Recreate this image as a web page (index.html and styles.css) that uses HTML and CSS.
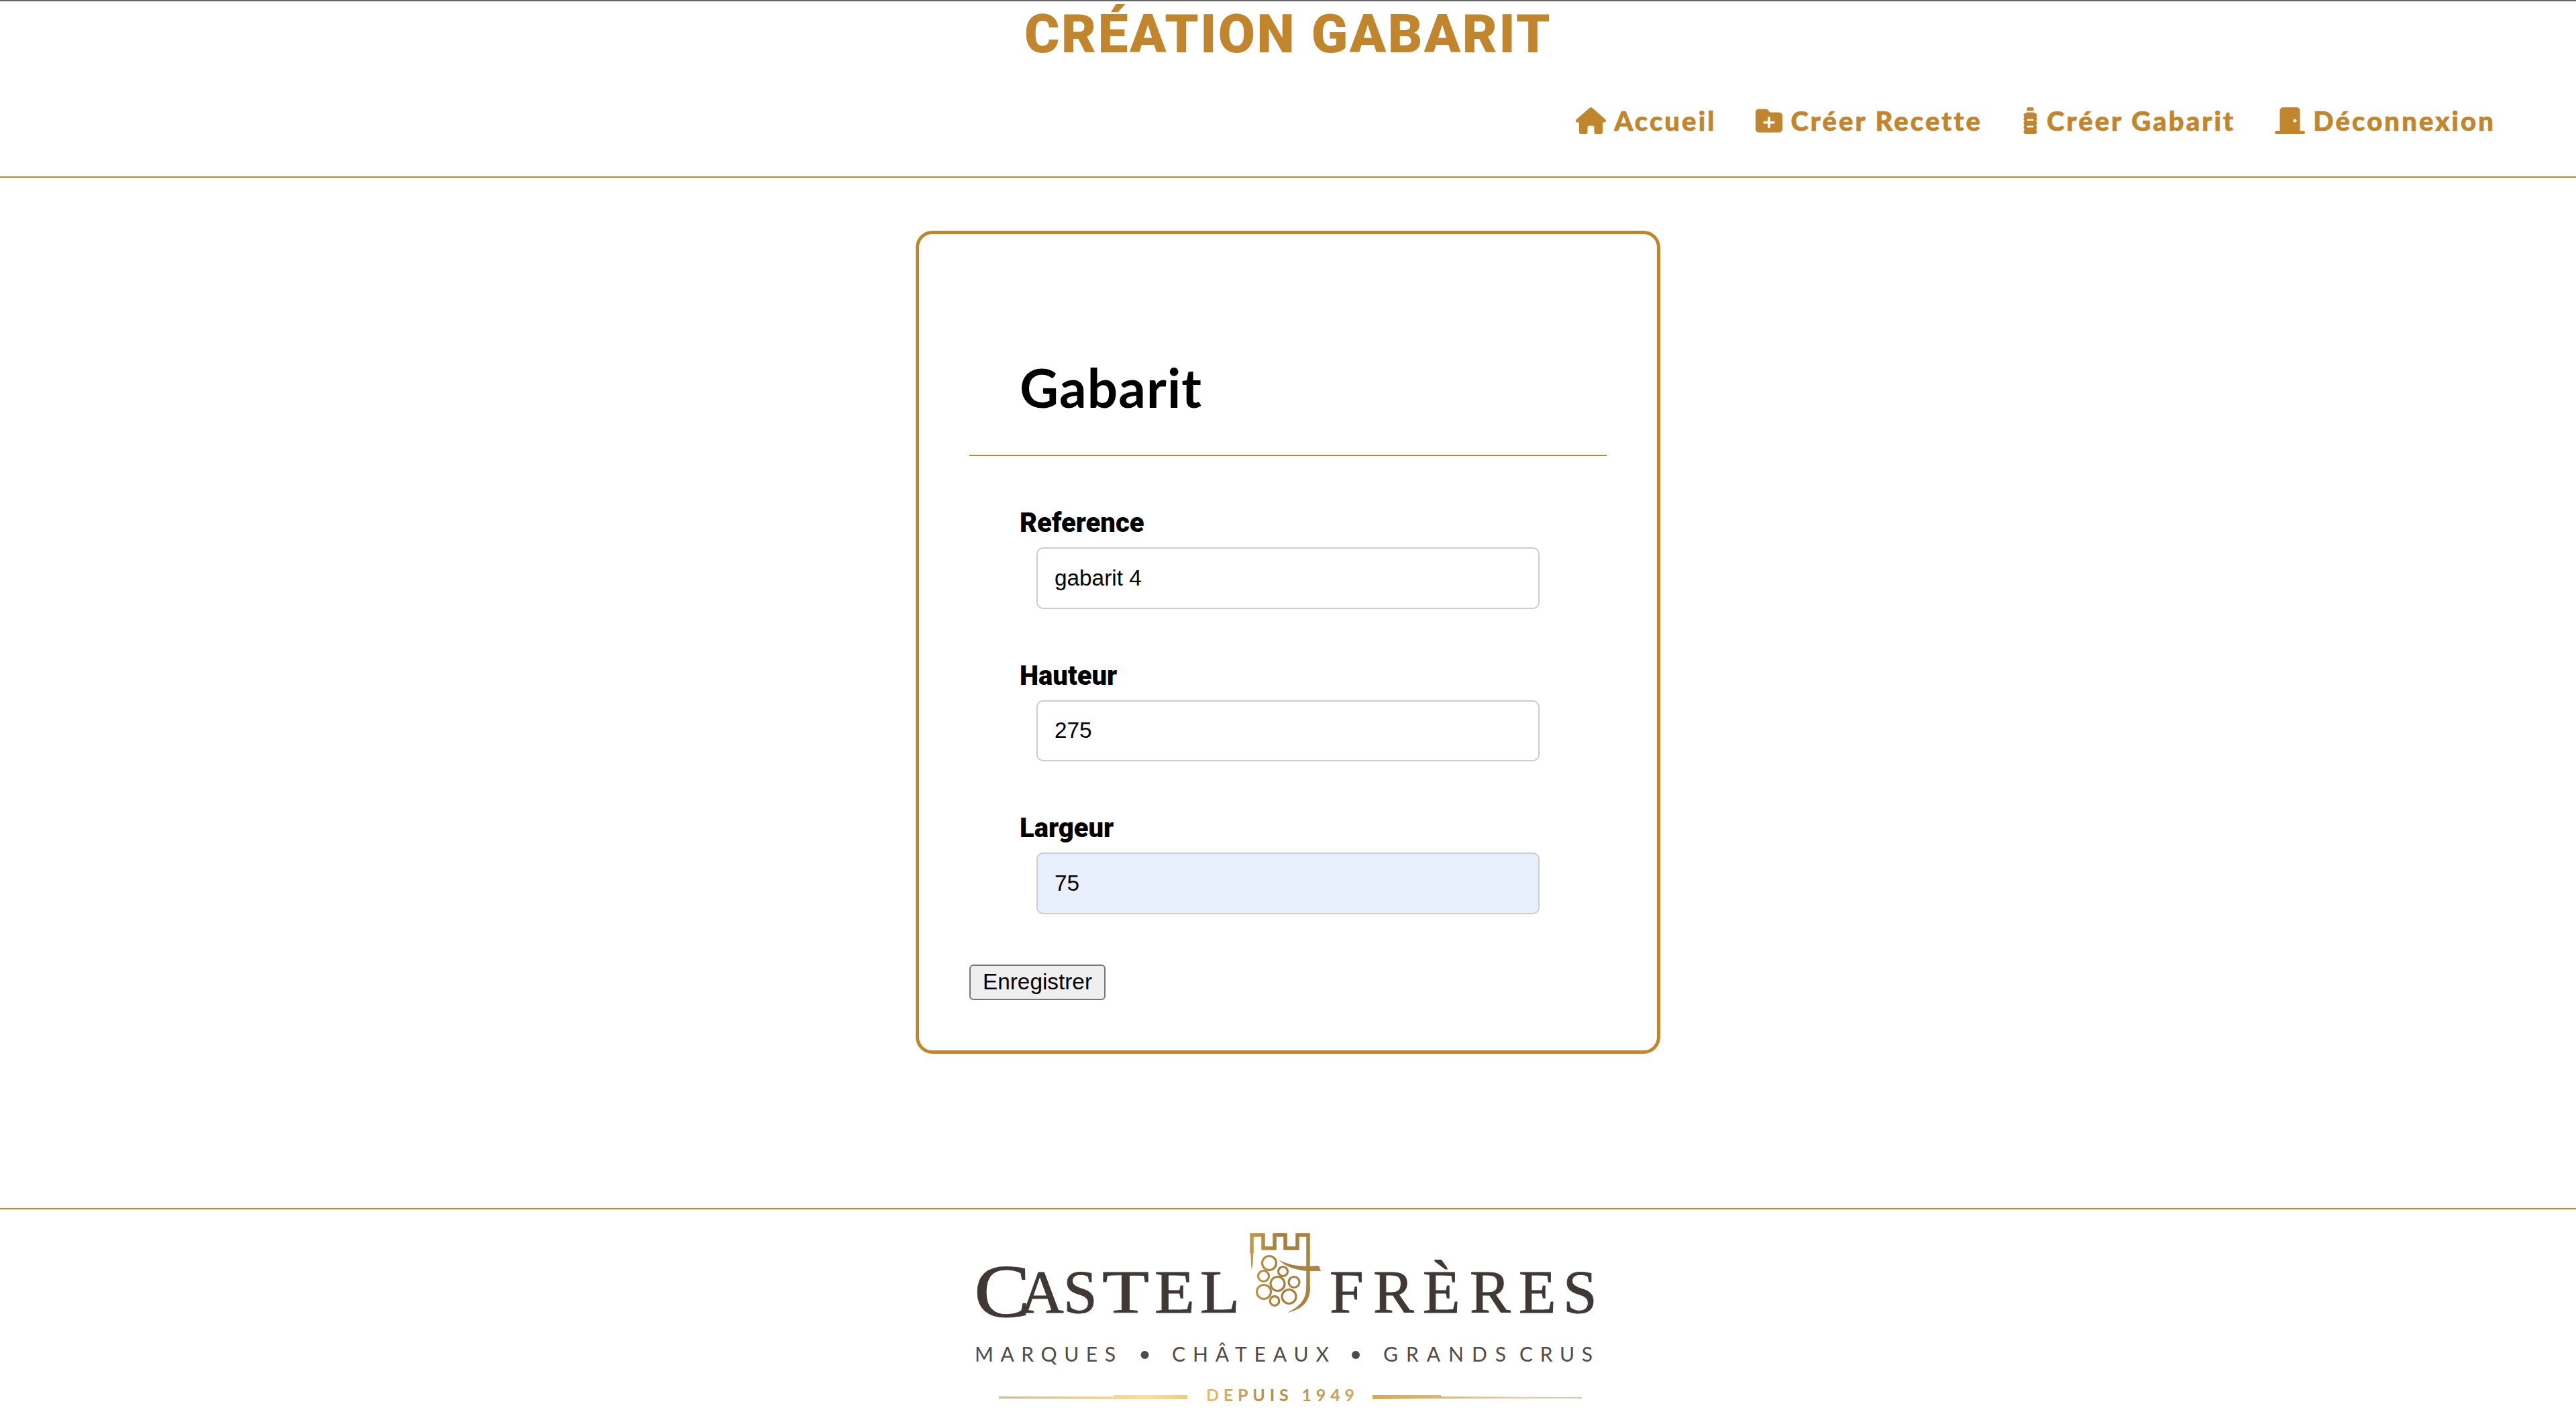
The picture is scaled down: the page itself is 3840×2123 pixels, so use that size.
FILE: index.html
```html
<!DOCTYPE html>
<html lang="fr">
<head>
<meta charset="utf-8">
<title>Création Gabarit</title>
<link rel="stylesheet" href="styles.css">
</head>
<body>
<header class="header">
  <h1 class="page-title">CRÉATION GABARIT</h1>
  <nav class="nav">
    <a class="nav-link"><svg class="icon icon-wide" viewBox="0 0 576 512"><path d="M575.8 255.5c0 18-15 32.1-32 32.1h-32l.7 160.2c0 2.7-.2 5.4-.5 8.1V472c0 22.1-17.9 40-40 40H456c-1.1 0-2.2 0-3.3-.1c-1.4 .1-2.8 .1-4.2 .1H416 392c-22.1 0-40-17.9-40-40V448 384c0-17.7-14.3-32-32-32H256c-17.7 0-32 14.3-32 32v64 24c0 22.1-17.9 40-40 40H160 128.1c-1.5 0-3-.1-4.5-.2c-1.2 .1-2.4 .2-3.6 .2H104c-22.1 0-40-17.9-40-40V360c0-.9 0-1.9 .1-2.8V287.6H32c-18 0-32-14-32-32.1c0-9 3-17 10-24L266.4 8c7-7 15-8 22-8s15 2 21 7L564.8 231.5c8 7 12 15 11 24z"/></svg><span>Accueil</span></a>
    <a class="nav-link"><svg class="icon" viewBox="0 0 512 512"><path d="M512 416c0 35.3-28.7 64-64 64H64c-35.3 0-64-28.7-64-64V96C0 60.7 28.7 32 64 32H192c20.1 0 39.1 9.5 51.2 25.6l19.2 25.6c6 8.1 15.5 12.8 25.6 12.8H448c35.3 0 64 28.7 64 64V416zM232 376c0 13.3 10.7 24 24 24s24-10.7 24-24V312h64c13.3 0 24-10.7 24-24s-10.7-24-24-24H280V200c0-13.3-10.7-24-24-24s-24 10.7-24 24v64H168c-13.3 0-24 10.7-24 24s10.7 24 24 24h64v64z"/></svg><span>Créer Recette</span></a>
    <a class="nav-link"><svg class="icon icon-narrow" viewBox="0 0 320 512"><path d="M120 0h80c13.3 0 24 10.7 24 24V64H96V24c0-13.3 10.7-24 24-24zM32 151.7c0-15.6 9-29.8 23.2-36.5l24.4-11.4c11-5.1 23-7.8 35.1-7.8h90.6c12.1 0 24.1 2.7 35.1 7.8l24.4 11.4c14.1 6.6 23.2 20.8 23.2 36.5c0 14.4-7.5 27-18.9 34.1c11.5 8.8 18.9 22.6 18.9 38.2c0 16.7-8.5 31.4-21.5 40c12.9 8.6 21.5 23.3 21.5 40s-8.5 31.4-21.5 40c12.9 8.6 21.5 23.3 21.5 40s-8.5 31.4-21.5 40c12.9 8.6 21.5 23.3 21.5 40c0 26.5-21.5 48-48 48H80c-26.5 0-48-21.5-48-48c0-16.7 8.5-31.4 21.5-40C40.5 415.4 32 400.7 32 384s8.5-31.4 21.5-40C40.5 335.4 32 320.7 32 304s8.5-31.4 21.5-40C40.5 255.4 32 240.7 32 224c0-15.6 7.4-29.4 18.9-38.2C39.5 178.7 32 166.1 32 151.7zM96 240c0 8.8 7.2 16 16 16h96c8.8 0 16-7.2 16-16s-7.2-16-16-16H112c-8.8 0-16 7.2-16 16zm16 112c-8.8 0-16 7.2-16 16s7.2 16 16 16h96c8.8 0 16-7.2 16-16s-7.2-16-16-16H112z"/></svg><span>Créer Gabarit</span></a>
    <a class="nav-link"><svg class="icon icon-wide" viewBox="0 0 576 512"><path d="M96 64c0-35.3 28.7-64 64-64H416c35.3 0 64 28.7 64 64V448h64c17.7 0 32 14.3 32 32s-14.3 32-32 32H432 144 32c-17.7 0-32-14.3-32-32s14.3-32 32-32H96V64zM384 288a32 32 0 1 0 0-64 32 32 0 1 0 0 64z"/></svg><span>Déconnexion</span></a>
  </nav>
</header>
<main class="main">
  <form class="card">
    <h2 class="card-title">Gabarit</h2>
    <div class="field"><label class="label" for="ref">Reference</label><input class="input" id="ref" value="gabarit 4"></div>
    <div class="field"><label class="label" for="haut">Hauteur</label><input class="input" id="haut" value="275"></div>
    <div class="field"><label class="label" for="larg">Largeur</label><input class="input input-filled" id="larg" value="75"></div>
    <button class="submit" type="button">Enregistrer</button>
  </form>
</main>
<footer class="footer">
  <svg class="logo" viewBox="1440 1803 960 320">
    <defs>
      <linearGradient id="gold" x1="1860" y1="0" x2="1970" y2="0" gradientUnits="userSpaceOnUse"><stop offset="0" stop-color="#c79a4b"/><stop offset=".45" stop-color="#a67c3c"/><stop offset="1" stop-color="#ad8648"/></linearGradient>
      <linearGradient id="left" x1="1489" y1="0" x2="1770" y2="0" gradientUnits="userSpaceOnUse"><stop offset="0" stop-color="#cdb999"/><stop offset=".5" stop-color="#ecd294"/><stop offset=".8" stop-color="#f9e09a"/><stop offset="1" stop-color="#ecca7c"/></linearGradient>
      <linearGradient id="right" x1="2046" y1="0" x2="2358" y2="0" gradientUnits="userSpaceOnUse"><stop offset="0" stop-color="#d5a850"/><stop offset=".35" stop-color="#dcb877"/><stop offset=".7" stop-color="#e3cdac"/><stop offset="1" stop-color="#d5cbbb"/></linearGradient>
      <linearGradient id="since" x1="1799" y1="0" x2="2021" y2="0" gradientUnits="userSpaceOnUse"><stop offset="0" stop-color="#e4be70"/><stop offset=".4" stop-color="#b48a48"/><stop offset="1" stop-color="#cfa75c"/></linearGradient>
    </defs>
    <g class="logo-name">
      <text x="1452" y="1963" font-size="112" textLength="84" lengthAdjust="spacingAndGlyphs">C</text>
      <text x="1520 1585" y="1957" font-size="91">AS</text>
      <text x="1643" y="1957" font-size="91" textLength="70" lengthAdjust="spacingAndGlyphs">T</text>
      <text x="1721" y="1957" font-size="91" textLength="60" lengthAdjust="spacingAndGlyphs">E</text>
      <text x="1789" y="1957" font-size="91" textLength="59" lengthAdjust="spacingAndGlyphs">L</text>
      <text x="1982 2047 2121 2191 2264 2330" y="1957" font-size="91">FRÈRES</text>
    </g>
    <g fill="none" stroke="url(#gold)">
      <path stroke-width="5.5" d="M1866 1868V1841H1883V1861H1900V1841H1916V1861H1934V1841H1950V1920"/>
      <g stroke-width="3.2"><circle cx="1892" cy="1883" r="10.5"/><circle cx="1912.500" cy="1895.500" r="7"/><circle cx="1883.500" cy="1902.500" r="8"/><circle cx="1904.500" cy="1914" r="10.500"/><circle cx="1929" cy="1911.500" r="8"/><circle cx="1884" cy="1926" r="10.500"/><circle cx="1921.500" cy="1933" r="10.500"/><circle cx="1900" cy="1939.500" r="6.800"/></g>
    </g>
    <g fill="url(#gold)"><path d="M1864 1865H1868.500L1867.500 1885L1865.500 1893Z"/><path d="M1947 1918H1953C1954 1938 1943 1952 1919 1957C1938 1948 1948 1936 1947 1918Z"/><path d="M1906 1878C1922 1887 1940 1889 1966 1887L1969 1895H1950C1934 1894 1916 1889 1906 1878Z"/></g>
    <g class="logo-tag">
      <text x="1453" y="2030" textLength="210">MARQUES</text><circle cx="1706.500" cy="2020" r="6"/>
      <text x="1747" y="2030" textLength="234">CHÂTEAUX</text><circle cx="2021" cy="2020" r="6"/>
      <text x="2062" y="2030" textLength="183">GRANDS</text><text x="2265" y="2030" textLength="109">CRUS</text>
    </g>
    <path fill="url(#left)" d="M1489 2082H1660V2080H1770V2086H1660L1489 2085Z"/>
    <path fill="url(#right)" d="M2046 2080H2148V2082L2358 2083V2085H2148L2046 2086Z"/>
    <text class="logo-since" x="1798" y="2089" textLength="221">DEPUIS 1949</text>
  </svg>
</footer>
</body>
</html>
```
FILE: styles.css
```css
* { box-sizing: border-box; }
body { margin: 0; background: #fff; color: #000; font-family: Roboto, sans-serif; display: flex; flex-direction: column; height: 2123px; overflow: hidden; }
.header { height: 265px; flex: none; border-top: 2px solid #666; border-bottom: 2px solid #c1862d; color: #c1862d; display: flex; flex-direction: column; }
.page-title { margin: 0; font-size: 80px; line-height: 98px; font-weight: 900; letter-spacing: 2.5px; text-align: center; }
.nav { display: flex; justify-content: flex-end; gap: 59px; padding: 56px 120px 0 0; font: 900 40px/48px Lato, sans-serif; letter-spacing: 3.1px; -webkit-text-stroke: 0.7px #c1862d; }
.nav-link { display: flex; align-items: center; gap: 12px; }
.icon { width: 40px; height: 40px; fill: currentColor; }
.icon-wide { width: 45px; }
.icon-narrow { width: 25px; }
.main { flex: none; height: 1536px; padding-top: 79px; }
.card { width: 1110px; height: 1227px; margin: 0 auto; border: 5px solid #c1862d; border-radius: 25px; padding: 155px 75px 0; }
.card-title { margin: 0; height: 176px; padding-left: 75px; border-bottom: 2px solid #c1862d; font: 700 80px/146px Lato, sans-serif; letter-spacing: 1.1px; }
.field { height: 227.5px; padding: 75px 0 0 75px; }
.label { display: block; font-size: 40px; line-height: 49px; font-weight: 900; height: 61px; }
.input { display: block; width: 750px; height: 91.5px; margin-left: 25px; padding: 0 25px; border: 2px solid #ccc; border-radius: 10px; background: #fff; color: #000; font: 33.333px "Liberation Sans", sans-serif; outline: none; }
.input-filled { background: #e8f0fe; }
.submit { display: block; width: 203px; height: 53px; margin-top: 75.5px; padding: 0 0 1px; border: 2px solid #767676; border-radius: 6px; background: #efefef; color: #000; font: 33.333px "Liberation Sans", sans-serif; }
.footer { height: 322px; flex: none; border-top: 2px solid #c1862d; display: flex; justify-content: center; }
.logo { display: block; width: 960px; height: 320px; }
.logo-name { font-family: "Liberation Serif", serif; fill: #403836; stroke: #403836; stroke-width: 1px; }
.logo-tag { font: 30px Lato, sans-serif; fill: #514a48; }
.logo-since { font: 700 25px Lato, sans-serif; fill: url(#since); }
```
